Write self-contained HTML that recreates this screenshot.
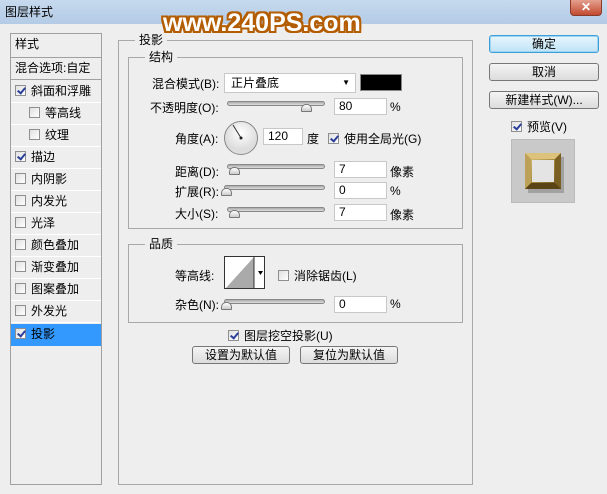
<!DOCTYPE html><html><head><meta charset="utf-8"><style>
*{margin:0;padding:0;box-sizing:border-box}
body{width:607px;height:494px;background:#eeeeee;font-family:"Liberation Sans","Noto Sans CJK SC",sans-serif;font-size:12px;color:#000;position:relative;overflow:hidden}
.a{position:absolute;white-space:nowrap}
.title{left:0;top:0;width:607px;height:24px;background:linear-gradient(#c6d9ee,#b4cbe6);}
.close{left:570px;top:0;width:32px;height:16px;background:linear-gradient(#e4a08e,#c24a30);border:1px solid #8a3a2a;border-top:none;border-radius:0 0 4px 4px;color:#fff;font-weight:bold;text-align:center;line-height:15px;font-size:12px}
.wm{left:163px;top:9px;font-size:25px;font-weight:bold;color:#fff;font-family:"Liberation Sans",sans-serif;text-shadow:2px 0 #b35c00,-2px 0 #b35c00,0 2px #b35c00,0 -2px #b35c00,2px 2px #b35c00,-2px -2px #b35c00,2px -2px #b35c00,-2px 2px #b35c00}
.lp{left:10px;top:33px;width:92px;height:452px;border:1px solid #a0a0a0;background:#eeeeee}
.row{position:absolute;left:0;width:90px;height:22px;border-bottom:1px solid #fff;line-height:21px;padding-left:4px}
.cb{display:inline-block;width:11px;height:11px;border:1px solid #8f8f8f;background:linear-gradient(135deg,#e0e0e0,#fff);vertical-align:-1px;margin-right:5px;position:relative}
.cb.on::after{content:"";position:absolute;left:3px;top:0px;width:3px;height:6px;border:solid #2b3f99;border-width:0 2px 2px 0;transform:rotate(40deg)}
.box{border:1px solid #a8a8a8}
.lbl{background:#eeeeee;padding:0 4px}
.inp{background:#fff;border:1px solid #c8c8c8;height:17px;line-height:15px;padding-left:4px}
.track{height:5px;border:1px solid #888;border-radius:3px;background:linear-gradient(#aaa,#ddd)}
.th{width:11px;height:8px;background:linear-gradient(#fff,#ccc);border:1px solid #777;border-radius:5px 5px 1px 1px}
.btn{border:1px solid #777;border-radius:3px;background:linear-gradient(#f4f4f4,#dcdcdc);text-align:center;line-height:16px}
</style></head><body>
<div class="a title"></div>
<div class="a" style="left:5px;top:3px;font-size:12px">图层样式</div>
<div class="a close">✕</div>

<div class="a lp">
<div class="row" style="top:0;height:24px;border-bottom:1px solid #a0a0a0;line-height:20px">样式</div>
<div class="row" style="top:24px;height:22px;border-bottom:1px solid #a0a0a0;line-height:20px">混合选项:自定</div>
<div class="row" style="top:47px"><span class="cb on"></span>斜面和浮雕</div>
<div class="row" style="top:69px;padding-left:18px"><span class="cb"></span>等高线</div>
<div class="row" style="top:91px;padding-left:18px"><span class="cb"></span>纹理</div>
<div class="row" style="top:113px"><span class="cb on"></span>描边</div>
<div class="row" style="top:135px"><span class="cb"></span>内阴影</div>
<div class="row" style="top:157px"><span class="cb"></span>内发光</div>
<div class="row" style="top:179px"><span class="cb"></span>光泽</div>
<div class="row" style="top:201px"><span class="cb"></span>颜色叠加</div>
<div class="row" style="top:223px"><span class="cb"></span>渐变叠加</div>
<div class="row" style="top:245px"><span class="cb"></span>图案叠加</div>
<div class="row" style="top:267px"><span class="cb"></span>外发光</div>
<div class="row" style="top:290px;background:#3399ff;border:none;height:22px"><span class="cb on"></span>投影</div>
</div>

<div class="a box" style="left:118px;top:40px;width:355px;height:445px"></div>
<div class="a lbl" style="left:135px;top:31px">投影</div>
<div class="a box" style="left:128px;top:57px;width:335px;height:172px"></div>
<div class="a lbl" style="left:145px;top:48px">结构</div>

<div class="a" style="left:152px;top:75px">混合模式(B):</div>
<div class="a inp" style="left:224px;top:73px;width:132px;height:20px;line-height:18px;padding-left:6px">正片叠底<span style="position:absolute;right:5px;top:0;font-size:8px">▼</span></div>
<div class="a" style="left:360px;top:74px;width:42px;height:17px;background:#000;border:1px solid #888"></div>

<div class="a" style="left:150px;top:99px">不透明度(O):</div>
<div class="a track" style="left:227px;top:101px;width:98px"></div>
<div class="a th" style="left:301px;top:104px"></div>
<div class="a inp" style="left:334px;top:98px;width:53px">80</div>
<div class="a" style="left:390px;top:100px">%</div>

<div class="a" style="left:175px;top:130px">角度(A):</div>
<svg class="a" style="left:223px;top:120px" width="36" height="36"><defs><radialGradient id="g" cx="50%" cy="35%"><stop offset="0" stop-color="#fff"/><stop offset="1" stop-color="#ddd"/></radialGradient></defs><circle cx="18" cy="18" r="16.5" fill="url(#g)" stroke="#888"/><line x1="18" y1="18" x2="10" y2="5" stroke="#333" stroke-width="1"/><circle cx="18" cy="18" r="1.5" fill="#222"/></svg>
<div class="a inp" style="left:263px;top:128px;width:40px">120</div>
<div class="a" style="left:307px;top:130px">度</div>
<div class="a" style="left:328px;top:130px"><span class="cb on"></span>使用全局光(G)</div>

<div class="a" style="left:175px;top:163px">距离(D):</div>
<div class="a track" style="left:227px;top:164px;width:98px"></div>
<div class="a th" style="left:229px;top:167px"></div>
<div class="a inp" style="left:334px;top:161px;width:53px">7</div>
<div class="a" style="left:390px;top:163px">像素</div>

<div class="a" style="left:175px;top:183px">扩展(R):</div>
<div class="a track" style="left:224px;top:185px;width:101px"></div>
<div class="a th" style="left:221px;top:188px"></div>
<div class="a inp" style="left:334px;top:182px;width:53px">0</div>
<div class="a" style="left:390px;top:184px">%</div>

<div class="a" style="left:175px;top:205px">大小(S):</div>
<div class="a track" style="left:227px;top:207px;width:98px"></div>
<div class="a th" style="left:229px;top:210px"></div>
<div class="a inp" style="left:334px;top:204px;width:53px">7</div>
<div class="a" style="left:390px;top:206px">像素</div>

<div class="a box" style="left:128px;top:244px;width:335px;height:79px"></div>
<div class="a lbl" style="left:145px;top:235px">品质</div>
<div class="a" style="left:175px;top:267px">等高线:</div>
<div class="a" style="left:224px;top:256px;width:41px;height:33px;border:1px solid #333;background:#fff;overflow:hidden">
<svg width="41" height="33" style="position:absolute;left:0;top:0"><polygon points="0,32 29,0 29,32" fill="#aaa"/><line x1="29" y1="0" x2="29" y2="33" stroke="#333"/><polygon points="33,14 38,14 35.5,18" fill="#000"/></svg></div>
<div class="a" style="left:278px;top:267px"><span class="cb"></span>消除锯齿(L)</div>
<div class="a" style="left:175px;top:296px">杂色(N):</div>
<div class="a track" style="left:224px;top:299px;width:101px"></div>
<div class="a th" style="left:221px;top:302px"></div>
<div class="a inp" style="left:334px;top:296px;width:53px">0</div>
<div class="a" style="left:390px;top:297px">%</div>

<div class="a" style="left:228px;top:327px"><span class="cb on"></span>图层挖空投影(U)</div>
<div class="a btn" style="left:192px;top:346px;width:98px;height:18px">设置为默认值</div>
<div class="a btn" style="left:300px;top:346px;width:98px;height:18px">复位为默认值</div>

<div class="a btn" style="left:489px;top:35px;width:110px;height:18px;border-color:#3c9fd8;background:linear-gradient(#e8f6fd,#bfe3f7);box-shadow:0 0 0 1px #9ed4f2 inset">确定</div>
<div class="a btn" style="left:489px;top:63px;width:110px;height:18px">取消</div>
<div class="a btn" style="left:489px;top:91px;width:110px;height:18px">新建样式(W)...</div>
<div class="a" style="left:511px;top:118px"><span class="cb on"></span>预览(V)</div>
<div class="a" style="left:511px;top:139px;width:64px;height:64px;background:#c9c9c9;border:1px solid #bbb">
<svg width="64" height="64" style="position:absolute;left:0;top:0"><defs><linearGradient id="gd" x1="0" y1="0" x2="1" y2="1"><stop offset="0" stop-color="#e8d18a"/><stop offset="0.5" stop-color="#a88a3c"/><stop offset="1" stop-color="#5e4716"/></linearGradient></defs>
<rect x="16" y="17" width="36" height="36" fill="#555" opacity="0.35"/>
<rect x="13" y="13" width="36" height="36" fill="url(#gd)"/>
<polygon points="13,13 49,13 43,19 19,19" fill="#dcc27a"/><polygon points="13,13 19,19 19,43 13,49" fill="#bda159"/><polygon points="49,13 49,49 43,43 43,19" fill="#7a5f22"/><polygon points="13,49 49,49 43,43 19,43" fill="#5a4415"/>
<rect x="20" y="20" width="22" height="22" fill="#e4e4e4"/></svg></div>

<div class="a wm">www.240PS.com</div>
</body></html>
